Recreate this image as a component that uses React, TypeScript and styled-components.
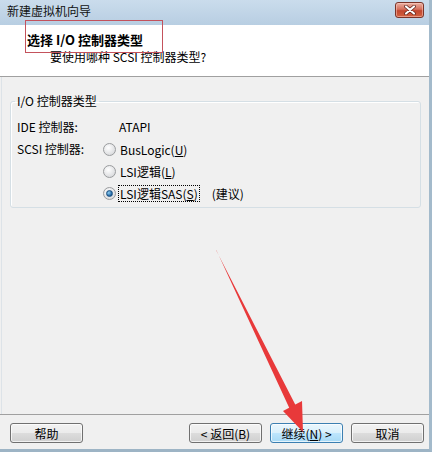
import styled, { createGlobalStyle } from "styled-components";

const GlobalStyle = createGlobalStyle`
  html, body {
    margin: 0;
    padding: 0;
    background: #ffffff;
  }
  body {
    font-family: "Noto Sans CJK SC", "Noto Sans", sans-serif;
    font-size: 12px;
    color: #000;
  }
`;

const App = () => {
  return (
    <>
      <GlobalStyle />
      <Window>
        <TitleBar>
          <TitleText>新建虚拟机向导</TitleText>
          <CloseButton>
            <svg width="12" height="10" viewBox="0 0 12 10">
              <path d="M2 1.5 L10 8.5 M10 1.5 L2 8.5" stroke="#5a1f18" strokeWidth="3.6" strokeLinecap="round" />
              <path d="M2 1.5 L10 8.5 M10 1.5 L2 8.5" stroke="#ffffff" strokeWidth="2.2" strokeLinecap="round" />
            </svg>
          </CloseButton>
        </TitleBar>

        <Header>
          <HeaderTitle>选择 I/O 控制器类型</HeaderTitle>
          <HeaderSub>要使用哪种 SCSI 控制器类型?</HeaderSub>
        </Header>

        <Body>
          <GroupBox>
            <Legend>I/O 控制器类型</Legend>
            <FormGrid>
              <FieldLabel>IDE 控制器:</FieldLabel>
              <FieldValue>ATAPI</FieldValue>
              <FieldLabel>SCSI 控制器:</FieldLabel>
              <RadioList>
                <RadioRow>
                  <Radio />
                  <RadioText>
                    BusLogic(<u>U</u>)
                  </RadioText>
                </RadioRow>
                <RadioRow>
                  <Radio />
                  <RadioText>
                    LSI逻辑(<u>L</u>)
                  </RadioText>
                </RadioRow>
                <RadioRow>
                  <Radio $checked />
                  <RadioText $focused>
                    LSI逻辑SAS(<u>S</u>)
                  </RadioText>
                  <Hint>(建议)</Hint>
                </RadioRow>
              </RadioList>
            </FormGrid>
          </GroupBox>
        </Body>

        <Footer>
          <Button>帮助</Button>
          <Spacer />
          <Button>&lt; 返回(B)</Button>
          <Button $primary>
            继续(<u>N</u>) &gt;
          </Button>
          <Button>取消</Button>
        </Footer>

        <Annotation />
        <ArrowLayer width="432" height="452" viewBox="0 0 432 452">
          <polygon
            points="216,250 296,406 290,409.5 216.5,250.5"
            fill="#e8393a"
          />
          <polygon points="302,401 283,411 303,432" fill="#e8393a" />
        </ArrowLayer>
      </Window>
    </>
  );
};

export default App;

const Window = styled.div`
  position: relative;
  width: 432px;
  height: 452px;
  box-sizing: border-box;
  display: flex;
  flex-direction: column;
  background: #f0f0f0;
  border-right: 3px solid #a3bacb;
  border-bottom: 3px solid #9db4c5;
  overflow: hidden;
`;

const TitleBar = styled.div`
  height: 25px;
  flex-shrink: 0;
  display: flex;
  align-items: center;
  justify-content: space-between;
  padding: 0 5px 0 7px;
  background: linear-gradient(#cadcec, #b8cee2);
`;

const TitleText = styled.span`
  font-size: 12px;
  line-height: 16px;
  color: #111;
  margin-top: -3px;
`;

const CloseButton = styled.div`
  width: 27px;
  height: 14px;
  margin-top: -6px;
  display: flex;
  align-items: center;
  justify-content: center;
  border: 1px solid #7a3328;
  border-radius: 3px;
  background: linear-gradient(#eab0a2, #d56f5c 45%, #c2472f 55%, #d2613f);
  box-shadow: inset 0 0 0 1px rgba(255, 210, 200, 0.5);
`;

const Header = styled.div`
  height: 52px;
  flex-shrink: 0;
  box-sizing: border-box;
  padding: 7px 0 0 27px;
  background: #ffffff;
  border-bottom: 1px solid #a0a0a0;
`;

const HeaderTitle = styled.div`
  font-size: 13px;
  line-height: 16px;
  font-weight: 700;
`;

const HeaderSub = styled.div`
  margin: 1px 0 0 23px;
  font-size: 12px;
  line-height: 16px;
`;

const Body = styled.div`
  flex: 1;
  padding: 16px 8px 0 10px;
  border-left: 1px solid #dde3e8;
  margin-left: 1px;
`;

const GroupBox = styled.fieldset`
  margin: 0 0 0 -2px;
  padding: 7px 0 3px 6px;
  border: 1px solid #d5dfe5;
  border-radius: 3px;
  box-shadow: inset 1px 1px 0 #ffffff;
`;

const Legend = styled.legend`
  margin-left: -2px;
  padding: 0 2px;
  font-size: 12px;
  line-height: 16px;
`;

const FormGrid = styled.div`
  display: grid;
  grid-template-columns: 86px auto;
  grid-auto-rows: min-content;
  align-items: start;
`;

const FieldLabel = styled.div`
  height: 22px;
  line-height: 22px;
`;

const FieldValue = styled.div`
  height: 22px;
  line-height: 22px;
  padding-left: 16px;
`;

const RadioList = styled.div`
  display: flex;
  flex-direction: column;
`;

const RadioRow = styled.div`
  height: 22px;
  display: flex;
  align-items: center;
`;

const Radio = styled.span<{ $checked?: boolean }>`
  width: 11px;
  height: 11px;
  border-radius: 50%;
  border: 1px solid #9a9c9e;
  background: radial-gradient(circle at 40% 35%, #ffffff, #e2e3e5 60%, #cfd1d4);
  margin-right: 3px;
  display: flex;
  align-items: center;
  justify-content: center;
  flex-shrink: 0;

  &::after {
    content: "";
    width: 5px;
    height: 5px;
    border-radius: 50%;
    display: ${(p) => (p.$checked ? "block" : "none")};
    background: radial-gradient(circle at 35% 35%, #8fd0f5, #1c5f9c 70%);
    border: 0.5px solid #1a4f80;
  }
`;

const RadioText = styled.span<{ $focused?: boolean }>`
  line-height: 15px;
  padding: 0 1px;
  outline: ${(p) => (p.$focused ? "1px dotted #000" : "none")};
`;

const Hint = styled.span`
  margin-left: 13px;
`;

const Footer = styled.div`
  height: 35px;
  flex-shrink: 0;
  box-sizing: border-box;
  display: flex;
  gap: 8px;
  padding: 8px 5px 0 10px;
  border-top: 1px solid #a0a0a0;
`;

const Spacer = styled.div`
  flex: 1;
`;

const Button = styled.div<{ $primary?: boolean }>`
  width: 73px;
  height: 20px;
  box-sizing: border-box;
  display: flex;
  align-items: center;
  justify-content: center;
  font-size: 12px;
  border-radius: 3px;
  border: 1px solid ${(p) => (p.$primary ? "#3c7fb1" : "#707070")};
  background: ${(p) =>
    p.$primary
      ? "linear-gradient(#eaf6fd, #d9f0fc 50%, #bee6fd 50%, #a7d9f5)"
      : "linear-gradient(#f2f2f2, #ebebeb 50%, #dddddd 50%, #cfcfcf)"};
  box-shadow: inset 0 0 0 1px rgba(255, 255, 255, 0.7);
`;

const Annotation = styled.div`
  position: absolute;
  left: 25px;
  top: 20px;
  width: 136px;
  height: 31px;
  border: 1px solid #c4525c;
  pointer-events: none;
`;

const ArrowLayer = styled.svg`
  position: absolute;
  left: 0;
  top: 0;
  pointer-events: none;
`;
